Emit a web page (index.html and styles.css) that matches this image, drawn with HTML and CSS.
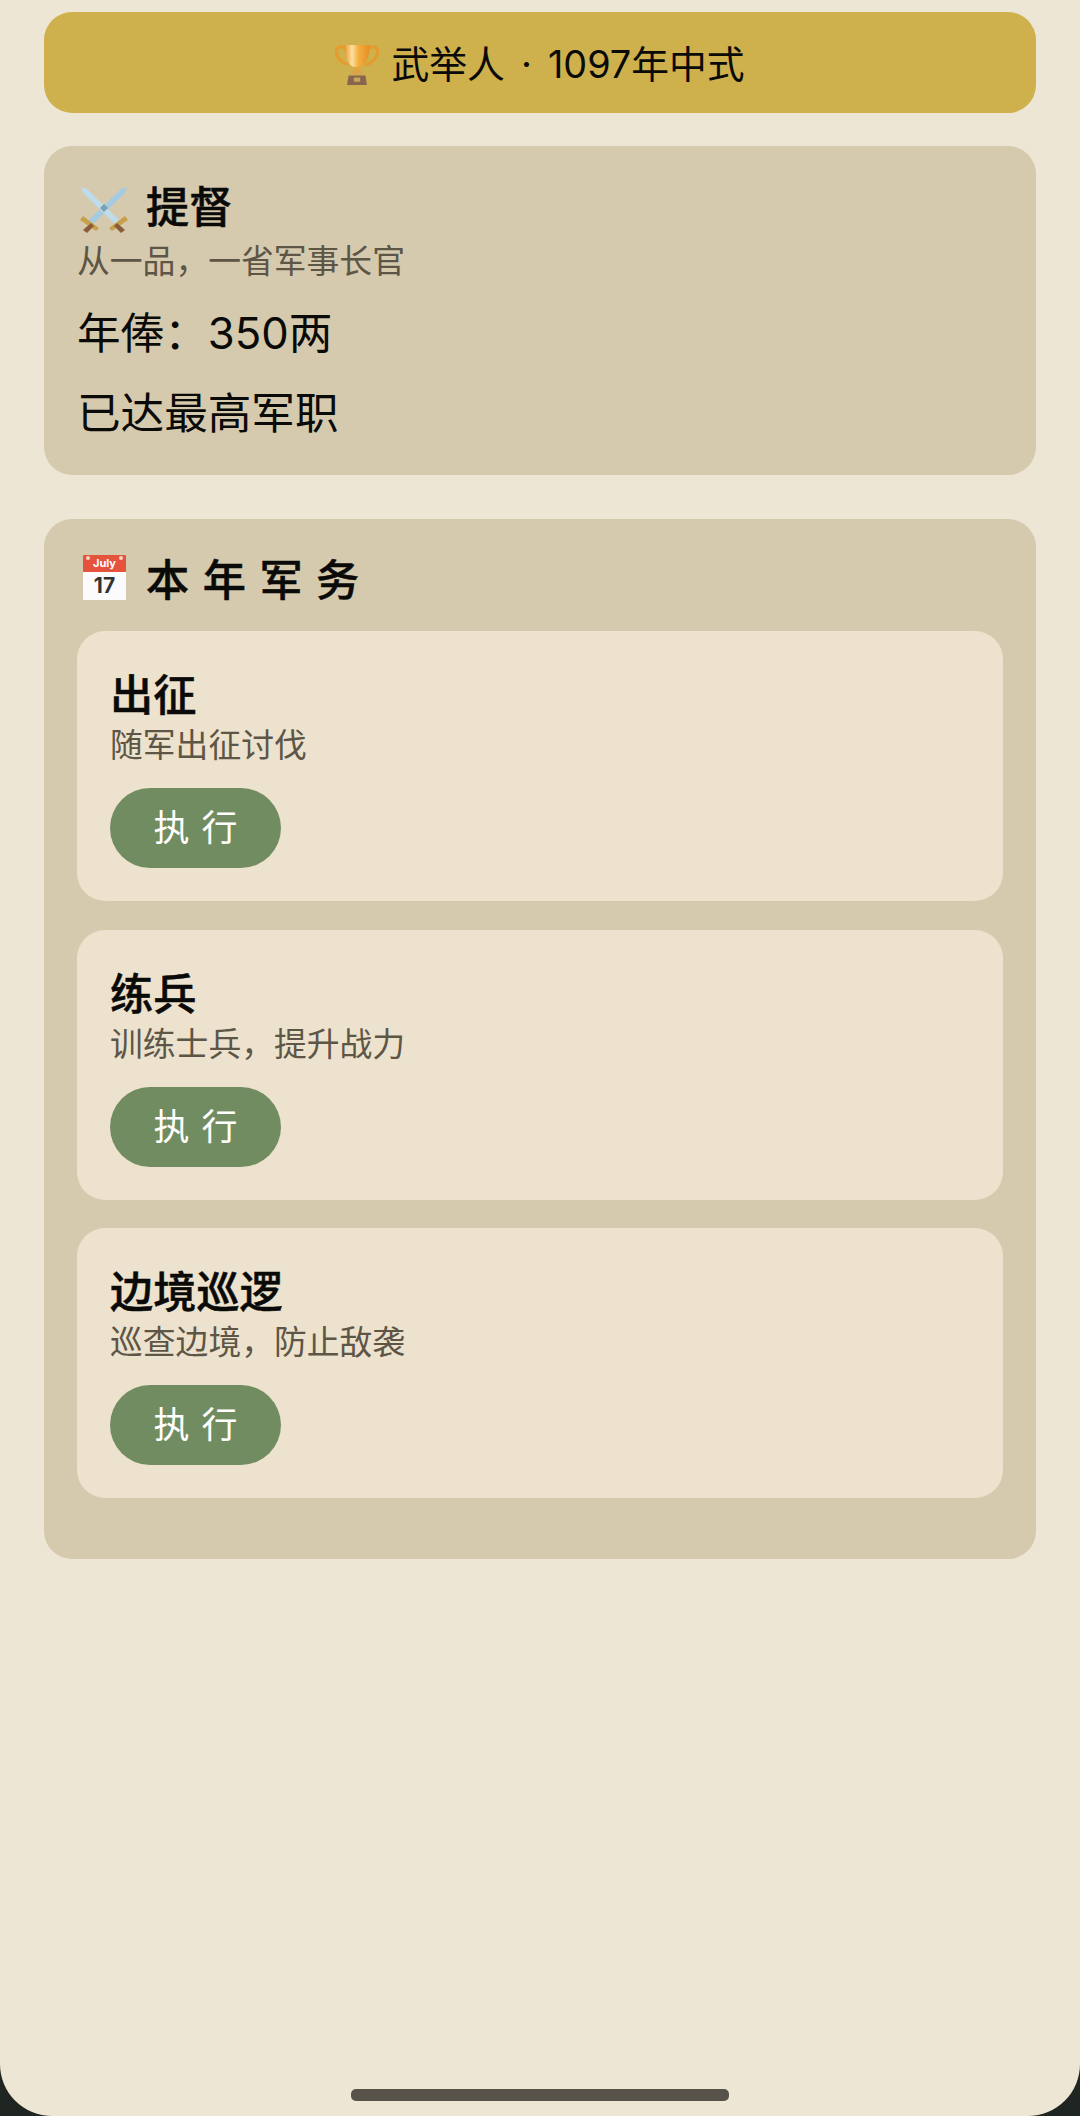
FILE: index.html
```html
<!DOCTYPE html>
<html lang="zh">

<head>
    <meta charset="UTF-8">
    <title>武举人</title>
    <meta name="viewport" content="width=device-width, initial-scale=1.0">
    <link rel="stylesheet" href="styles.css">
</head>

<body>
    <div class="banner">
        <svg class="icon-trophy" viewBox="0 0 42 40">
            <defs>
                <linearGradient id="cup" x1="0" y1="0" x2="1" y2="0">
                    <stop offset="0" stop-color="#e8952a"/>
                    <stop offset="0.3" stop-color="#fde0a2"/>
                    <stop offset="0.55" stop-color="#f4ae3f"/>
                    <stop offset="1" stop-color="#e58f25"/>
                </linearGradient>
            </defs>
            <path d="M10 4C4 1 0 4 1.500 9c1 5 6 9 11 11" fill="none" stroke="#e59c2c" stroke-width="3"/>
            <path d="M32 4c6-3 10 0 8.500 5-1 5-6 9-11 11" fill="none" stroke="#e59c2c" stroke-width="3"/>
            <path d="M9 1h24c0 11-3 19-9 21h-6C12 20 9 12 9 1z" fill="url(#cup)"/>
            <path d="M19 22h4l.5 7h-5z" fill="#e8a037"/>
            <rect x="16" y="26" width="10" height="3" fill="#d9a24b"/>
            <path d="M13 30h16l1.500 9h-19z" fill="#86674d"/>
            <rect x="18" y="32" width="6" height="4" fill="#cba35f"/>
        </svg>
        <span class="banner-text">武举人 · 1097年中式</span>
    </div>

    <div class="card">
        <div class="card-title">
            <svg class="icon-swords" viewBox="0 0 48 46">
                <path d="M47 0 45 6 13 37l-4-4L41 2z" fill="#a3cbe2"/>
                <path d="M1 0 3 6l32 31 4-4L7 2z" fill="#bfdcec"/>
                <path d="M24 17l4 4-4 4-4-4z" fill="#7ba0b6"/>
                <path d="M3 29 19 41l-3 3L0 33z" fill="#c9a04a"/>
                <path d="M45 29 29 41l3 3 16-11z" fill="#c9a04a"/>
                <path d="M11 36l3 3-7 7-4-3z" fill="#8c5c38"/>
                <path d="M37 36l-3 3 7 7 4-3z" fill="#8c5c38"/>
            </svg>
            <span>提督</span>
        </div>
        <div class="card-sub">从一品，一省军事长官</div>
        <div class="card-line salary">年俸：350两</div>
        <div class="card-line next">已达最高军职</div>
    </div>

    <div class="card duties">
        <div class="card-title spaced">
            <svg class="icon-calendar" viewBox="0 0 43 45">
                <rect y="17" width="43" height="28" rx="1" fill="#fbfbfd"/>
                <rect width="43" height="17" rx="1" fill="#e5533d"/>
                <circle cx="5" cy="3" r="2" fill="#f6d5c8"/>
                <circle cx="38" cy="3" r="2" fill="#f6d5c8"/>
                <text x="21.5" y="12" class="cal-month">July</text>
                <text x="21.5" y="38" class="cal-day">17</text>
            </svg>
            <span>本年军务</span>
        </div>

        <div class="duty">
            <div class="duty-name">出征</div>
            <div class="duty-desc">随军出征讨伐</div>
            <button class="run">执行</button>
        </div>

        <div class="duty">
            <div class="duty-name">练兵</div>
            <div class="duty-desc">训练士兵，提升战力</div>
            <button class="run">执行</button>
        </div>

        <div class="duty">
            <div class="duty-name">边境巡逻</div>
            <div class="duty-desc">巡查边境，防止敌袭</div>
            <button class="run">执行</button>
        </div>
    </div>

    <div class="home-bar"></div>
</body>

</html>
```

FILE: styles.css
```css
html {
    background: #1f2520;
}

body {
    position: relative;
    box-sizing: border-box;
    margin: 0;
    width: 1080px;
    height: 2116px;
    padding: 12px 44px 0;
    overflow: hidden;
    background: #ede6d4;
    border-radius: 0 0 52px 52px;
    color: #0a0a08;
    font-family: Inter, "Noto Sans CJK SC", sans-serif;
}

.banner {
    display: flex;
    align-items: center;
    justify-content: center;
    gap: 12px;
    box-sizing: border-box;
    height: 101px;
    padding-bottom: 2px;
    margin-bottom: 33px;
    background: #ceb04d;
    border-radius: 28px;
    font-size: 37.8px;
}

.banner-text {
    word-spacing: 5.500px;
}

.icon-trophy {
    width: 44px;
    height: 42px;
    margin-top: 6px;
}

.card {
    padding: 28px 33px 32px;
    margin-bottom: 44px;
    background: #d5c9ae;
    border-radius: 28px;
}

.card-title {
    display: flex;
    align-items: center;
    gap: 18px;
    height: 60px;
    font-size: 43.2px;
    font-weight: 500;
    -webkit-text-stroke: 0.5px #0a0a08;
}

.card-sub {
    height: 44px;
    margin-top: 5px;
    line-height: 44px;
    font-size: 32.8px;
    color: #5d5546;
}

.card-line {
    height: 58px;
    line-height: 58px;
    font-size: 43.6px;
}

.salary {
    margin-top: 22px;
}

.next {
    margin-top: 22px;
}

.icon-swords {
    width: 48px;
    height: 46px;
    margin-top: 12px;
    margin-left: 3px;
}

.duties {
    padding-bottom: 32px;
}

.spaced {
    gap: 20px;
    margin-bottom: 24px;
    letter-spacing: 13.5px;
}

.icon-calendar {
    width: 43px;
    height: 45px;
    margin-left: 6px;
}

.cal-month {
    fill: #fff;
    font-size: 11px;
    font-weight: 700;
    letter-spacing: 0;
    stroke: none;
    text-anchor: middle;
}

.cal-day {
    fill: #333;
    font-size: 21px;
    font-weight: 700;
    letter-spacing: 0;
    stroke: none;
    text-anchor: middle;
}

.duty {
    padding: 33px;
    margin-bottom: 28.5px;
    background: #ece2cd;
    border-radius: 28px;
}

.duty-name {
    height: 60px;
    line-height: 62px;
    font-size: 43.2px;
    font-weight: 500;
    -webkit-text-stroke: 0.5px #0a0a08;
}

.duty-desc {
    height: 42px;
    line-height: 42px;
    font-size: 32.8px;
    color: #5d5546;
}

.run {
    display: block;
    width: 171px;
    height: 80px;
    padding: 0 0 6px;
    margin-top: 22px;
    background: #728c62;
    border: none;
    border-radius: 40px;
    color: #fff;
    font-family: inherit;
    font-size: 36px;
    letter-spacing: 12px;
    text-indent: 12px;
}

.home-bar {
    position: absolute;
    left: 351px;
    top: 2089px;
    width: 378px;
    height: 12px;
    background: #57534a;
    border-radius: 5px;
}
```
